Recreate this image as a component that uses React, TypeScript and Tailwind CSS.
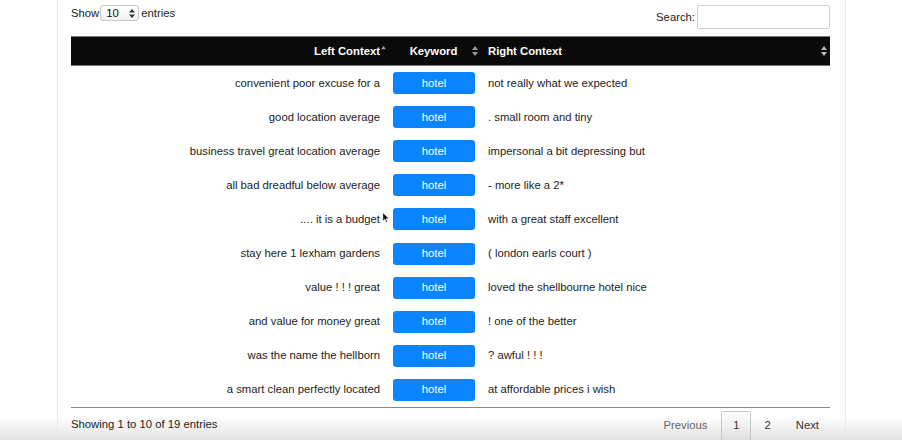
import React from 'react';

const rows: [string, string][] = [
  ['convenient poor excuse for a', 'not really what we expected'],
  ['good location average', '. small room and tiny'],
  ['business travel great location average', 'impersonal a bit depressing but'],
  ['all bad dreadful below average', '- more like a 2*'],
  ['.... it is a budget', 'with a great staff excellent'],
  ['stay here 1 lexham gardens', '( london earls court )'],
  ['value ! ! ! great', 'loved the shellbourne hotel nice'],
  ['and value for money great', '! one of the better'],
  ['was the name the hellborn', '? awful ! ! !'],
  ['a smart clean perfectly located', 'at affordable prices i wish'],
];

const SortBoth = ({ color = '#8a8a8a' }: { color?: string }) => (
  <svg width="6" height="10" viewBox="0 0 6 10">
    <path d="M3 0 L6 4 L0 4 Z" fill={color} />
    <path d="M3 10 L6 6 L0 6 Z" fill={color} />
  </svg>
);

const App: React.FC = () => {
  return (
    <div
      className="relative w-[902px] h-[440px] overflow-hidden bg-white text-[11.3px] text-[#333]"
      style={{ fontFamily: '"Liberation Sans", Arial, Helvetica, sans-serif' }}
    >
      {/* page panel */}
      <div className="absolute inset-y-0 left-[57px] w-[789px] border-x border-[#ededed]" />
      <div className="absolute bottom-0 left-0 right-0 h-[24px] bg-gradient-to-b from-transparent to-[#e2e2e2]" />

      <div className="relative ml-[71px] w-[759px]">
        {/* controls */}
        <div className="flex items-start justify-between h-[36px] pt-[5px]">
          <div className="flex items-center h-[16px]">
            <span className="text-[#222]">Show</span>
            <div className="ml-[1px] mr-[2px] w-[39px] h-[16px] border border-[#c8c8c8] rounded-[3px] bg-gradient-to-b from-white to-[#f0f0f0] flex items-center justify-between pl-[5px] pr-[3px]">
              <span className="text-[#111]">10</span>
              <svg width="6" height="9" viewBox="0 0 6 9">
                <path d="M3 0 L6 3.5 L0 3.5 Z" fill="#333" />
                <path d="M3 9 L6 5.5 L0 5.5 Z" fill="#333" />
              </svg>
            </div>
            <span className="text-[#222]">entries</span>
          </div>
          <div className="flex items-center">
            <span className="text-[#222] mr-[2px]">Search:</span>
            <div className="w-[133px] h-[24px] border border-[#cfcfcf] rounded-[2px] bg-white" />
          </div>
        </div>

        {/* table */}
        <div className="border-b border-[#888]">
          <div className="flex h-[30px] bg-[#0a0a0a] border-y border-[#777] text-white font-bold">
            <div className="w-[315px] flex items-center justify-end pr-[6px] relative">
              <span>Left Context</span>
              <svg className="absolute right-[0px] top-[9px]" width="5" height="4" viewBox="0 0 6 5">
                <path d="M3 0 L6 4 L0 4 Z" fill="#8aa0c8" />
              </svg>
            </div>
            <div className="w-[95px] flex items-center justify-center relative">
              <span>Keyword</span>
              <span className="absolute right-[3px] top-[9px]">
                <SortBoth color="#9a9a9a" />
              </span>
            </div>
            <div className="flex-1 flex items-center pl-[7px] relative">
              <span>Right Context</span>
              <span className="absolute right-[3px] top-[9px]">
                <SortBoth color="#bdbdbd" />
              </span>
            </div>
          </div>

          {rows.map(([left, right], i) => (
            <div key={i} className="flex items-center h-[34.1px]">
              <div className="w-[315px] text-right pr-[6px] text-[#222] whitespace-nowrap">{left}</div>
              <div className="w-[95px] flex justify-center pl-[1px]">
                <div className="w-[82px] h-[22px] rounded-[3px] bg-[#0a84ff] text-white flex items-center justify-center">
                  hotel
                </div>
              </div>
              <div className="flex-1 pl-[7px] text-[#222] whitespace-nowrap">{right}</div>
            </div>
          ))}
        </div>

        {/* footer */}
        <div className="flex items-start justify-between pt-[3px]">
          <div className="pt-[5px] text-[#222]">Showing 1 to 10 of 19 entries</div>
          <div className="flex items-start">
            <span className="pr-[14px] pt-[6px] text-[#666]">Previous</span>
            <div className="w-[30px] h-[32px] border border-[#c6c6c6] rounded-[2px] bg-gradient-to-b from-white to-[#dcdcdc] flex justify-center pt-[5px] text-[#333]">
              1
            </div>
            <span className="px-[13px] pt-[6px] text-[#333]">2</span>
            <span className="pl-[12px] pr-[11px] pt-[6px] text-[#333]">Next</span>
          </div>
        </div>
      </div>

      {/* mouse cursor */}
      <svg className="absolute left-[382px] top-[212px]" width="8" height="12" viewBox="0 0 8 13">
        <path d="M0.5 0.5 L0.5 10 L2.8 7.8 L4.3 11.5 L5.8 10.8 L4.3 7.3 L7.5 7.3 Z" fill="#111" stroke="#fff" strokeWidth="0.8" />
      </svg>
    </div>
  );
};

export default App;
